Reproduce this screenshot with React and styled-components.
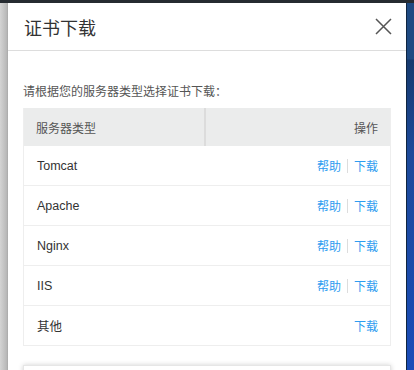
import React from 'react';
import styled, { createGlobalStyle } from 'styled-components';

const Global = createGlobalStyle`
  html, body {
    margin: 0;
    padding: 0;
    background: #fff;
    font-family: "Liberation Sans", "Noto Sans CJK SC", sans-serif;
    overflow: hidden;
  }
`;

const Screen = styled.div`
  width: 414px;
  height: 370px;
  display: flex;
  flex-direction: column;
  overflow: hidden;
`;

const TopBar = styled.div`
  height: 3px;
  background: #262b31;
  flex: none;
`;

const Stage = styled.div`
  flex: 1;
  display: flex;
  min-height: 0;
`;

const Backdrop = styled.div`
  width: 8px;
  flex: none;
  background: linear-gradient(to right, #d4d4d4, #b9b9b9 80%, #a8a8a8);
`;

const Side = styled.div`
  width: 7px;
  flex: none;
  border-left: 1px solid #0f2540;
  background: linear-gradient(to bottom, #1f4a82 0, #1f4a82 56px, #163a6e 57px, #1d4a9a 150px, #1a4cb8 100%);
`;

const Modal = styled.div`
  flex: 1;
  background: #fff;
  display: flex;
  flex-direction: column;
`;

const Header = styled.div`
  height: 47px;
  border-bottom: 1px solid #ddd;
  display: flex;
  align-items: center;
  justify-content: space-between;
  padding: 0 14px 0 16px;
  flex: none;
`;

const Title = styled.h2`
  margin: 0;
  font-size: 18px;
  font-weight: normal;
  color: #333;
  font-family: "Noto Sans CJK SC", sans-serif;
`;

const Close = styled.button`
  border: 0;
  background: none;
  padding: 0;
  width: 18px;
  height: 18px;
  display: flex;
  align-items: center;
  justify-content: center;
  color: #555;
`;

const Body = styled.div`
  padding: 30px 15px 0;
`;

const Prompt = styled.p`
  margin: 0 0 7px;
  font-size: 12px;
  line-height: 20px;
  color: #555;
  font-family: "Noto Sans CJK SC", sans-serif;
`;

const Table = styled.div`
  border: 1px solid #eee;
  border-top: 0;
`;

const HeadRow = styled.div`
  display: grid;
  grid-template-columns: 180px 1fr;
  height: 38px;
  background: #ebecec;
`;

const HeadCell = styled.div`
  display: flex;
  align-items: center;
  padding: 0 12px;
  font-size: 12px;
  color: #555;
  font-family: "Noto Sans CJK SC", sans-serif;
  justify-content: ${p => (p.$right ? 'flex-end' : 'flex-start')};
  border-left: ${p => (p.$right ? '2px solid #dcdcdc' : 'none')};
`;

const Row = styled.div`
  display: flex;
  align-items: center;
  justify-content: space-between;
  height: 39px;
  padding: 0 12px 0 13px;
  border-bottom: 1px solid #eee;
  &:last-child {
    border-bottom: 0;
  }
`;

const Name = styled.span`
  font-size: 12.5px;
  color: #333;
`;

const Actions = styled.div`
  display: flex;
  align-items: center;
  gap: 6px;
`;

const Link = styled.a`
  font-size: 12px;
  color: #2d9cf0;
  text-decoration: none;
  font-family: "Noto Sans CJK SC", sans-serif;
`;

const Sep = styled.span`
  width: 1px;
  height: 14px;
  background: #ddd;
`;

const NextBox = styled.div`
  margin-top: 19px;
  height: 20px;
  border: 1px solid #e6e6e6;
  box-shadow: 0 0 5px rgba(0, 0, 0, 0.18);
`;

const servers = [
  { name: 'Tomcat', help: true },
  { name: 'Apache', help: true },
  { name: 'Nginx', help: true },
  { name: 'IIS', help: true },
  { name: '其他', help: false },
];

export default function App() {
  return (
    <Screen>
      <Global />
      <TopBar />
      <Stage>
        <Backdrop />
        <Modal>
          <Header>
            <Title>证书下载</Title>
            <Close aria-label="关闭">
              <svg width="17" height="17" viewBox="0 0 17 17">
                <path d="M1 1L16 16M16 1L1 16" stroke="currentColor" strokeWidth="1.5" fill="none" />
              </svg>
            </Close>
          </Header>
          <Body>
            <Prompt>请根据您的服务器类型选择证书下载：</Prompt>
            <Table>
              <HeadRow>
                <HeadCell>服务器类型</HeadCell>
                <HeadCell $right>操作</HeadCell>
              </HeadRow>
              {servers.map(s => (
                <Row key={s.name}>
                  <Name>{s.name}</Name>
                  <Actions>
                    {s.help && <Link href="#">帮助</Link>}
                    {s.help && <Sep />}
                    <Link href="#">下载</Link>
                  </Actions>
                </Row>
              ))}
            </Table>
            <NextBox />
          </Body>
        </Modal>
        <Side />
      </Stage>
    </Screen>
  );
}
